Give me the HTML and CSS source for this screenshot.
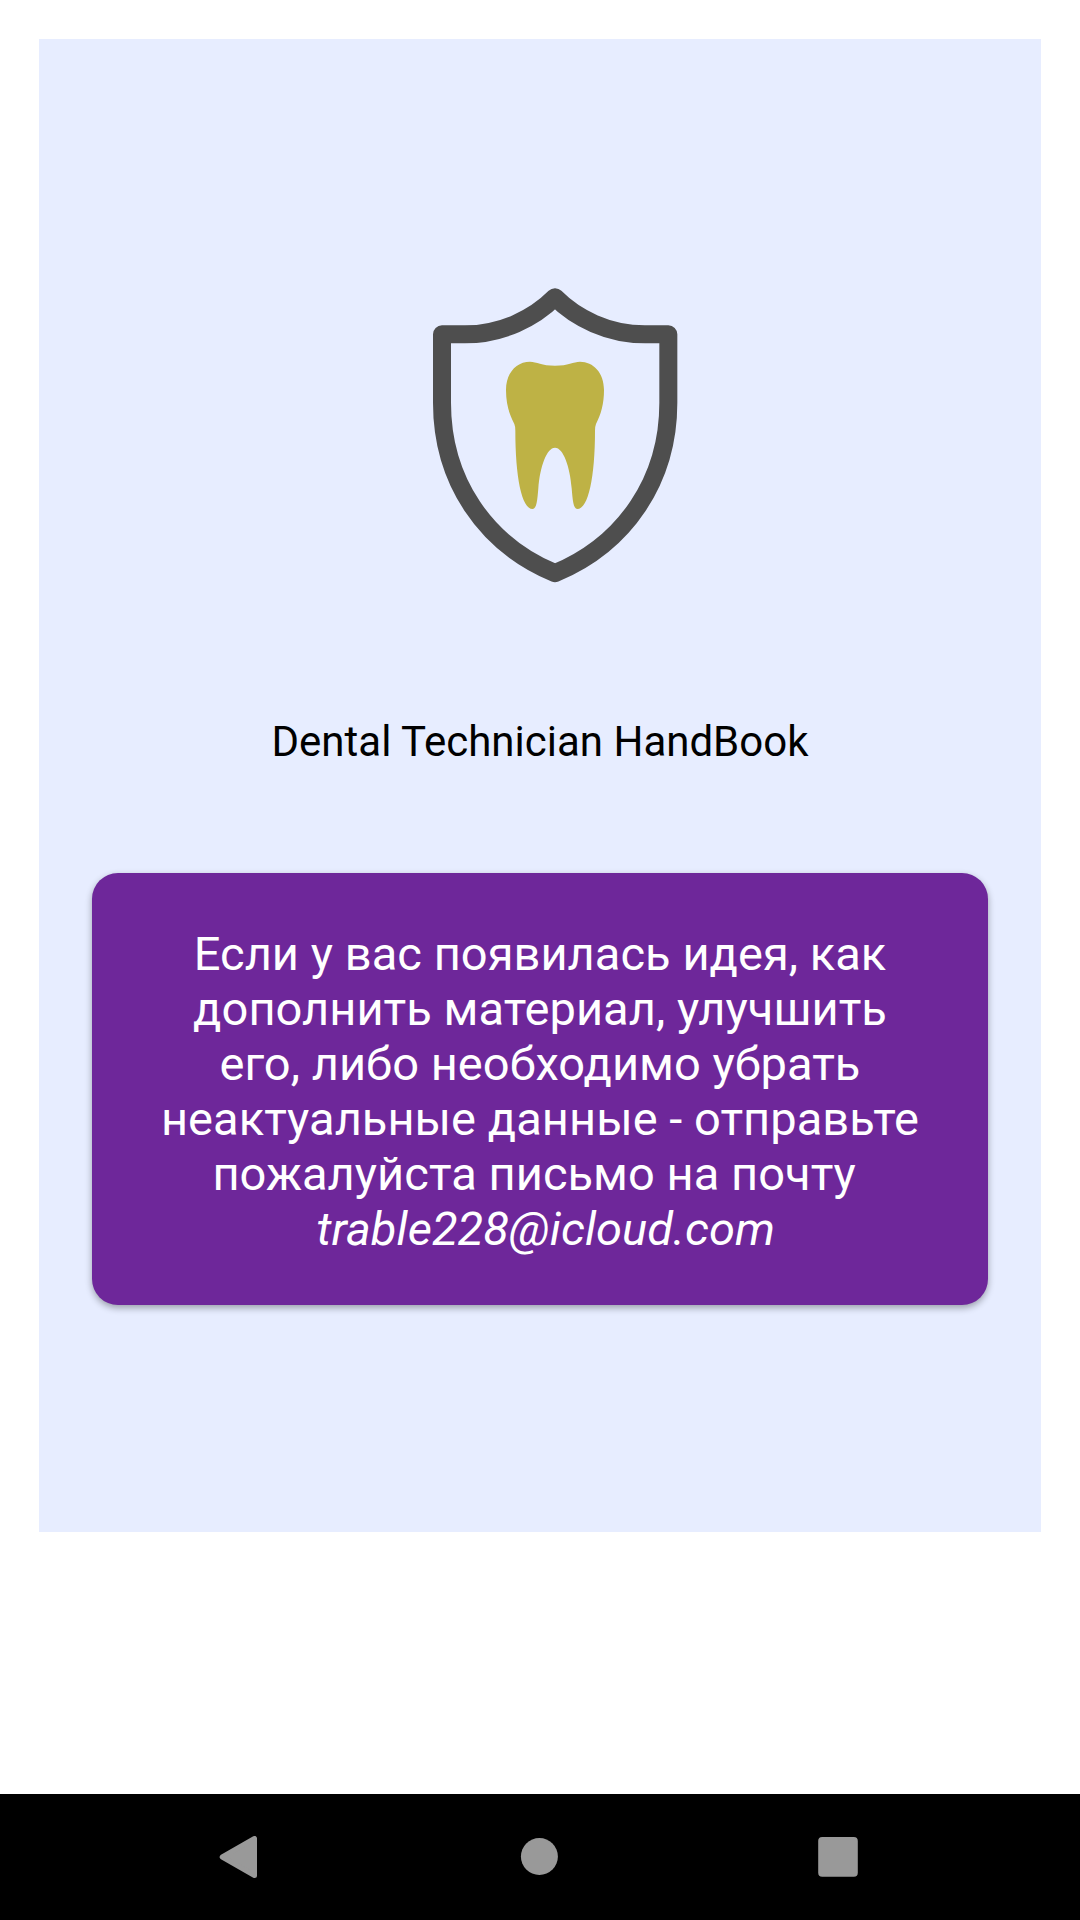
FILE: index.html
```html
<!DOCTYPE html>
<html lang="ru">
<head>
<meta charset="utf-8">
<title>Dental Technician HandBook</title>
<link rel="stylesheet" href="styles.css">
</head>
<body>
<main class="screen">
  <section class="panel">
    <svg class="logo" viewBox="0 0 810 990" aria-hidden="true">
      <path class="logo-shield" d="M405 81.500C342 145 245 193 135 193H66V398C66 630 194 822 405 909.500C616 822 745 630 745 398V193H675C565 193 468 145 405 81.500Z"/>
      <path class="logo-tooth" d="M405 287C365 287 350 275 330 275C290 275 258 308 258 360C258 402 268 433 283 462Q286 469 286 482C286 620 305 717 338 717C350 717 352 690 355 655C360 590 380 533 405 533C430 533 450 590 455 655C458 690 460 717 472 717C505 717 525 620 525 482Q525 469 528 462C543 433 552 402 552 360C552 308 520 275 480 275C460 275 445 287 405 287Z"/>
    </svg>
    <h1 class="title">Dental Technician HandBook</h1>
    <p class="card">Если у вас появилась идея, как<br>дополнить материал, улучшить<br>его, либо необходимо убрать<br>неактуальные данные - отправьте<br>пожалуйста письмо на почту&nbsp;<br><em>&nbsp;trable228@icloud.com</em></p>
  </section>
</main>
<nav class="navbar">
  <svg class="nav-icon" viewBox="0 0 42 42"><path class="back" d="M5.200 21L37.500 2.500V39.500Z"/></svg>
  <svg class="nav-icon" viewBox="0 0 42 42"><circle cx="22.400" cy="20.500" r="18.500"/></svg>
  <svg class="nav-icon" viewBox="0 0 42 42"><rect x="1.200" y="1" width="39.600" height="39.800" rx="4"/></svg>
</nav>
</body>
</html>
```
FILE: styles.css
```css
* {
  box-sizing: border-box;
}

body {
  margin: 0;
  height: 1920px;
  display: flex;
  flex-direction: column;
  background: #fff;
  font-family: Roboto, sans-serif;
}

.screen {
  flex: 1;
  padding: 39px;
}

.panel {
  height: 1493px;
  padding: 231px 53px 0;
  background: #e7edff;
  display: flex;
  flex-direction: column;
  align-items: center;
}

.logo {
  width: 270px;
  height: 330px;
  margin-left: 30px;
}

.logo-shield {
  fill: none;
  stroke: #4e4e4e;
  stroke-width: 54;
  stroke-linejoin: round;
}

.logo-tooth {
  fill: #beb245;
}

.title {
  margin: 117px 0 0;
  font-size: 42px;
  line-height: 49px;
  font-weight: 400;
  color: #000;
  white-space: nowrap;
}

.card {
  margin: 107px 0 0;
  width: 896px;
  height: 432px;
  padding-top: 53px;
  border-radius: 26px;
  background: #6e279a;
  box-shadow: 0 3px 7px rgba(0, 0, 0, 0.33);
  color: #fff;
  font-size: 47px;
  letter-spacing: 0.05px;
  line-height: 55px;
  text-align: center;
  white-space: nowrap;
}

.navbar {
  height: 126px;
  padding: 42px 221px 42px 217px;
  display: flex;
  justify-content: space-between;
  background: #000;
}

.nav-icon {
  width: 42px;
  height: 42px;
  fill: #999;
}

.back {
  stroke: #999;
  stroke-width: 5;
  stroke-linejoin: round;
}
```
